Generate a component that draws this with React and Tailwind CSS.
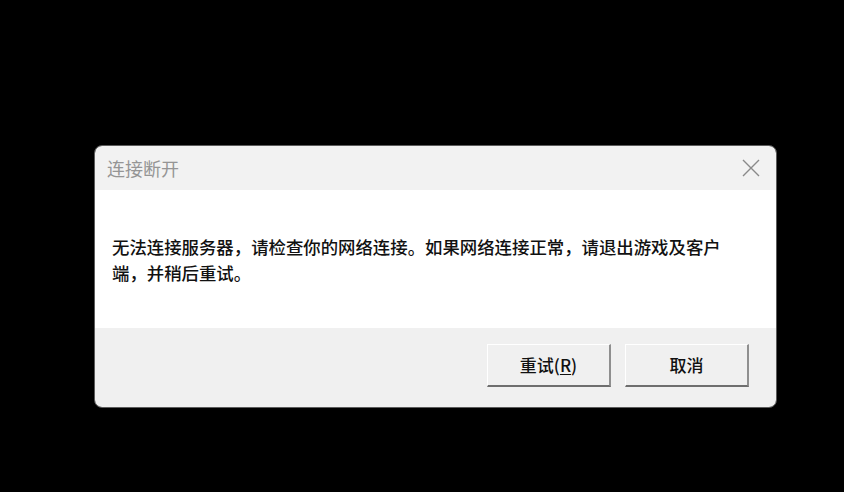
export default function App() {
  const cjk = { fontFamily: '"Noto Sans CJK SC", "Noto Sans", sans-serif' };

  return (
    <div className="w-[844px] h-[492px] bg-black overflow-hidden pt-[145px] pl-[94px]" style={cjk}>
      <div className="w-[683px] h-[263px] rounded-[8px] border border-[#5c5c5c] overflow-hidden flex flex-col">
        {/* title bar */}
        <div className="h-[44px] bg-[#f2f2f2] flex items-center justify-between pl-[12px] pr-[16px]">
          <span className="text-[18px] text-[#959595] leading-none">连接断开</span>
          <svg width="18" height="18" viewBox="0 0 18 18">
            <path d="M1 1 L17 17 M17 1 L1 17" stroke="#8a8a8a" strokeWidth="1.4" fill="none" />
          </svg>
        </div>

        {/* message */}
        <div className="h-[138px] bg-white pl-[17px] pt-[44px]">
          <p className="max-w-[620px] text-[17.4px] leading-[26px] font-medium text-[#111]">
            无法连接服务器，请检查你的网络连接。如果网络连接正常，请退出游戏及客户端，并稍后重试。
          </p>
        </div>

        {/* buttons */}
        <div className="flex-1 bg-[#f0f0f0] flex justify-end gap-[14px] pt-[16px] pr-[27px]">
          <button className="w-[124px] h-[43px] bg-[#f0f0f0] border-t border-l border-t-white border-l-white border-r-2 border-b-2 border-r-[#8f8f8f] border-b-[#6e6e6e] text-[17px] text-[#111] font-medium">
            重试(<span className="underline underline-offset-2">R</span>)
          </button>
          <button className="w-[124px] h-[43px] bg-[#f0f0f0] border-t border-l border-t-white border-l-white border-r-2 border-b-2 border-r-[#8f8f8f] border-b-[#6e6e6e] text-[17px] text-[#111] font-medium">
            取消
          </button>
        </div>
      </div>
    </div>
  );
}
